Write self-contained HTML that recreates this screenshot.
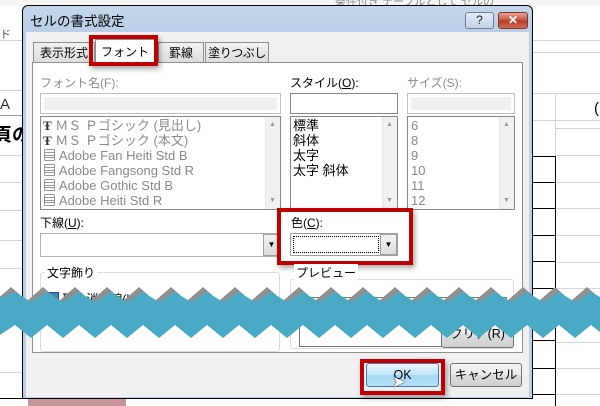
<!DOCTYPE html>
<html><head><meta charset="utf-8"><style>
*{margin:0;padding:0;box-sizing:border-box}
body{width:600px;height:406px;overflow:hidden;background:#fff;position:relative;font-family:"Liberation Sans","Noto Sans CJK JP",sans-serif;font-size:12px;color:#000}
.a{position:absolute}
.hl{position:absolute;height:1px;background:#d4d4d4}
.vl{position:absolute;width:1px;background:#d4d4d4}
.box{position:absolute;border:1px solid #828790;background:#fff}
.lbl{position:absolute;font-size:12px;color:#000;white-space:nowrap}
.gray{color:#8a8a8a}
.item{position:absolute;font-size:13px;white-space:nowrap;line-height:15px}
.sb{position:absolute;background:#f0f0f0;border-left:1px solid #e6e6e6}
.red{position:absolute;border:4px solid #c00000;box-shadow:2px 3px 5px rgba(0,0,0,.35)}
.tab{position:absolute;border:1px solid #8e8f8f;border-bottom:none;background:linear-gradient(#f2f2f2,#dcdcdc);font-size:12px;text-align:center;line-height:20px;white-space:nowrap;overflow:hidden}
.btn{position:absolute;border:1px solid #707070;border-radius:3px;background:linear-gradient(#f2f2f2 0,#ebebeb 50%,#dddddd 51%,#cfcfcf 100%);text-align:center;font-size:12.5px;line-height:22px;white-space:nowrap;overflow:hidden}
.dd{position:absolute;width:17px;border:1px solid #a0a0a0;background:linear-gradient(#f4f4f4,#dcdcdc);font-size:8px;text-align:center}
</style></head><body>
<div class="a" style="left:0;top:0;width:600px;height:6px;background:#f5f5f5"></div>
<div class="lbl" style="left:0;top:26px;font-size:11px;color:#555">ド</div>
<div class="hl" style="left:0;top:40px;width:22px"></div>
<div class="hl" style="left:0;top:90px;width:22px"></div>
<div class="lbl" style="left:0;top:96px;font-size:15px;color:#333">A</div>
<div class="hl" style="left:0;top:115px;width:22px;background:#999"></div>
<div class="lbl" style="left:-6px;top:121px;font-size:18px;font-weight:bold">頁の</div>
<div class="hl" style="left:0;top:155px;width:22px"></div>
<div class="hl" style="left:0;top:182px;width:22px"></div>
<div class="hl" style="left:0;top:210px;width:22px"></div>
<div class="hl" style="left:0;top:240px;width:22px"></div>
<div class="hl" style="left:0;top:268px;width:22px"></div>
<div class="hl" style="left:0;top:372px;width:22px"></div>
<div class="hl" style="left:0;top:398px;width:22px"></div>
<div class="lbl" style="left:335px;top:-7px;font-size:11px;color:#888">条件付き テーブルとして セルの</div>
<div class="hl" style="left:532px;top:40px;width:68px"></div>
<div class="hl" style="left:532px;top:52px;width:68px"></div>
<div class="vl" style="left:555px;top:93px;height:313px"></div>
<div class="hl" style="left:532px;top:93px;width:68px"></div>
<div class="lbl" style="left:594px;top:100px;font-size:15px">(</div>
<div class="hl" style="left:532px;top:120px;width:68px"></div>
<div class="a" style="left:532px;top:156px;width:24px;height:250px;border-right:1.5px solid #000"></div>
<div class="hl" style="left:532px;top:156px;width:24px;background:#000"></div>
<div class="hl" style="left:532px;top:182px;width:24px;background:#000"></div>
<div class="hl" style="left:532px;top:208px;width:24px;background:#000"></div>
<div class="hl" style="left:532px;top:235px;width:24px;background:#000"></div>
<div class="hl" style="left:532px;top:261px;width:24px;background:#000"></div>
<div class="hl" style="left:532px;top:288px;width:24px;background:#000"></div>
<div class="hl" style="left:532px;top:340px;width:24px;background:#000"></div>
<div class="hl" style="left:532px;top:368px;width:24px;background:#000"></div>
<div class="hl" style="left:532px;top:394px;width:24px;background:#000"></div>
<div class="hl" style="left:556px;top:128px;width:44px"></div>
<div class="hl" style="left:556px;top:155px;width:44px"></div>
<div class="hl" style="left:556px;top:182px;width:44px"></div>
<div class="hl" style="left:556px;top:208px;width:44px"></div>
<div class="hl" style="left:556px;top:235px;width:44px"></div>
<div class="hl" style="left:556px;top:262px;width:44px"></div>
<div class="hl" style="left:556px;top:288px;width:44px"></div>
<div class="hl" style="left:556px;top:342px;width:44px"></div>
<div class="hl" style="left:556px;top:368px;width:44px"></div>
<div class="hl" style="left:556px;top:394px;width:44px"></div>
<div class="a" style="left:28px;top:399px;width:98px;height:7px;background:#c8969a"></div>
<div class="a" style="left:0;top:398px;width:460px;height:1px;background:#000"></div>

<div class="a" style="left:22px;top:5px;width:511px;height:394px;border:1px solid #000;border-radius:6px 6px 0 0;background:linear-gradient(#c4d7ec,#b6cde6 30px,#b9cfe8 30px);"></div>
<div class="lbl" style="left:30px;top:10px;font-size:13.5px">セルの書式設定</div>
<div class="a" style="left:465px;top:12px;width:29px;height:17px;border:1px solid #6d7e94;border-radius:3px;background:linear-gradient(#e3ebf5,#c3d2e4);text-align:center;font-size:12px;line-height:15px;color:#222">?</div>
<div class="a" style="left:498px;top:12px;width:30px;height:17px;border:1px solid #7a3a30;border-radius:3px;background:linear-gradient(#e8a492,#c6513c 50%,#b73a24 51%,#d26a52);text-align:center;font-size:12px;line-height:15px;color:#fff;font-weight:bold">✕</div>
<div class="a" style="left:26px;top:32px;width:503px;height:365px;background:#f0f0f0"></div>

<div class="tab" style="left:33px;top:42px;width:62px;height:21px">表示形式</div>
<div class="tab" style="left:158px;top:42px;width:46px;height:21px">罫線</div>
<div class="tab" style="left:205px;top:42px;width:64px;height:21px;letter-spacing:-0.5px">塗りつぶし</div>
<div class="a" style="left:32px;top:62px;width:491px;height:291px;border:1px solid #8e8f8f;background:#fff"></div>
<div class="tab" style="left:95px;top:39px;width:60px;height:25px;background:#fff;line-height:24px">フォント</div>
<div class="red" style="left:89px;top:35px;width:69px;height:31px"></div>

<div class="lbl gray" style="left:40px;top:74px">フォント名(F):</div>
<div class="box" style="left:40px;top:93px;width:241px;height:21px;border-color:#c0c0c0"><div class="a" style="left:3px;top:3px;width:233px;height:13px;background:#f0f0f0"></div></div>
<div class="box" style="left:40px;top:116px;width:241px;height:94px">
 <div class="sb" style="left:224px;top:0;width:15px;height:92px"><div class="a" style="left:3px;top:4px;font-size:7px;color:#999">▲</div><div class="a" style="left:3px;top:80px;font-size:7px;color:#999">▼</div></div>
</div>
<div class="item gray" style="left:43px;top:118px"><b style="color:#333;font-family:'Liberation Serif',serif">Ŧ</b> ＭＳ Ｐゴシック (見出し)</div>
<div class="item gray" style="left:43px;top:133px"><b style="color:#333;font-family:'Liberation Serif',serif">Ŧ</b> ＭＳ Ｐゴシック (本文)</div>
<div class="item gray" style="left:43px;top:148px"><span style="color:#333">▤</span> Adobe Fan Heiti Std B</div>
<div class="item gray" style="left:43px;top:163px"><span style="color:#333">▤</span> Adobe Fangsong Std R</div>
<div class="item gray" style="left:43px;top:178px"><span style="color:#333">▤</span> Adobe Gothic Std B</div>
<div class="item gray" style="left:43px;top:193px"><span style="color:#333">▤</span> Adobe Heiti Std R</div>

<div class="lbl" style="left:290px;top:74px">スタイル(<u>O</u>):</div>
<div class="box" style="left:290px;top:93px;width:108px;height:21px"></div>
<div class="box" style="left:290px;top:116px;width:108px;height:94px">
 <div class="sb" style="left:91px;top:0;width:15px;height:92px"><div class="a" style="left:3px;top:4px;font-size:7px;color:#999">▲</div><div class="a" style="left:3px;top:80px;font-size:7px;color:#999">▼</div></div>
</div>
<div class="item" style="left:293px;top:118px">標準</div>
<div class="item" style="left:293px;top:133px">斜体</div>
<div class="item" style="left:293px;top:148px">太字</div>
<div class="item" style="left:293px;top:163px">太字 斜体</div>

<div class="lbl gray" style="left:407px;top:74px">サイズ(S):</div>
<div class="box" style="left:407px;top:93px;width:108px;height:21px;border-color:#c0c0c0"><div class="a" style="left:3px;top:3px;width:100px;height:13px;background:#f0f0f0"></div></div>
<div class="box" style="left:407px;top:116px;width:108px;height:94px">
 <div class="sb" style="left:91px;top:0;width:15px;height:92px"><div class="a" style="left:3px;top:4px;font-size:7px;color:#999">▲</div><div class="a" style="left:3px;top:80px;font-size:7px;color:#999">▼</div></div>
</div>
<div class="item gray" style="left:411px;top:118px">6</div>
<div class="item gray" style="left:411px;top:133px">8</div>
<div class="item gray" style="left:411px;top:148px">9</div>
<div class="item gray" style="left:411px;top:163px">10</div>
<div class="item gray" style="left:411px;top:178px">11</div>
<div class="item gray" style="left:411px;top:193px">12</div>

<div class="lbl" style="left:40px;top:214px">下線(<u>U</u>):</div>
<div class="box" style="left:40px;top:233px;width:240px;height:24px;border-color:#b0b0b0"></div>
<div class="dd" style="left:263px;top:234px;height:22px;line-height:20px">▼</div>
<div class="lbl" style="left:291px;top:214px">色(<u>C</u>):</div>
<div class="box" style="left:290px;top:233px;width:108px;height:23px;border-color:#a0a0a0"><div class="a" style="left:2px;top:2px;width:86px;height:17px;border:1px dotted #000"></div></div>
<div class="dd" style="left:380px;top:234px;height:21px;line-height:19px">▼</div>
<div class="red" style="left:277px;top:208px;width:136px;height:57px"></div>

<div class="a" style="left:40px;top:272px;width:240px;height:80px;border:1px solid #d5dfe5;border-radius:3px"></div>
<div class="lbl" style="left:45px;top:264px;background:#fff;padding:0 2px">文字飾り</div>
<div class="a" style="left:290px;top:279px;width:224px;height:70px;border:1px solid #d5dfe5;border-radius:3px"></div>
<div class="lbl" style="left:294px;top:264px;background:#fff;padding:0 2px">プレビュー</div>
<div class="a" style="left:299px;top:297px;width:208px;height:50px;border:1px solid #777"></div>
<div class="lbl" style="left:48px;top:290px"><span style="display:inline-block;width:11px;height:11px;border:1px solid #1e4f8a;background:#4a80c0"></span> 取り消し線(K)</div>
<div class="btn" style="left:441px;top:320px;width:73px;height:28px;line-height:26px">クリア(R)</div>

<div class="btn" style="left:366px;top:363px;width:73px;height:24px;border-color:#3c7fb1;background:linear-gradient(#e8f5fd,#bfe3f8 50%,#a7d9f5 51%,#b3def7)">OK</div>
<div class="a" style="left:392px;top:372px;font-size:16px;color:#fff;text-shadow:0 0 1px #000,0 0 1px #000">➤</div>
<div class="red" style="left:360px;top:359px;width:85px;height:36px"></div>
<div class="btn" style="left:450px;top:363px;width:72px;height:24px">キャンセル</div>

<svg class="a" style="left:0;top:280px" width="600" height="65" viewBox="0 0 600 65">
<defs>
<path id="z" d="M-17,22 L-1,8 L15,22 L31,8 L47,22 L63,8 L79,22 L95,8 L111,22 L127,8 L143,22 L159,8 L175,22 L191,8 L207,22 L223,8 L239,22 L255,8 L271,22 L287,8 L303,22 L319,8 L335,22 L351,8 L367,22 L383,8 L399,22 L415,8 L431,22 L447,8 L463,22 L479,8 L495,22 L511,8 L527,22 L543,8 L559,22 L575,8 L591,22 L607,8 L623,22 L623,45 L-17,45 Z"/>
</defs>
<use href="#z" fill="#8f8f8f" transform="translate(12,-1)"/>
<path fill="#4aa9c4" d="M0,18 L15,12 L31,22 L47,12 L63,22 L79,12 L95,22 L111,12 L127,22 L143,12 L159,22 L175,12 L191,22 L207,12 L223,22 L239,12 L255,22 L271,12 L287,22 L303,12 L319,22 L335,12 L351,22 L367,12 L383,22 L399,12 L415,22 L431,12 L447,22 L463,12 L479,22 L495,12 L511,22 L527,12 L543,22 L559,12 L575,22 L591,12 L600,17 L600,52 L591,45 L575,58 L559,45 L543,58 L527,45 L511,58 L495,45 L479,58 L463,45 L447,58 L431,45 L415,58 L399,45 L383,58 L367,45 L351,58 L335,45 L319,58 L303,45 L287,58 L271,45 L255,58 L239,45 L223,58 L207,45 L191,58 L175,45 L159,58 L143,45 L127,58 L111,45 L95,58 L79,45 L63,58 L47,45 L31,58 L15,45 L0,55 Z"/>
</svg>
</body></html>
